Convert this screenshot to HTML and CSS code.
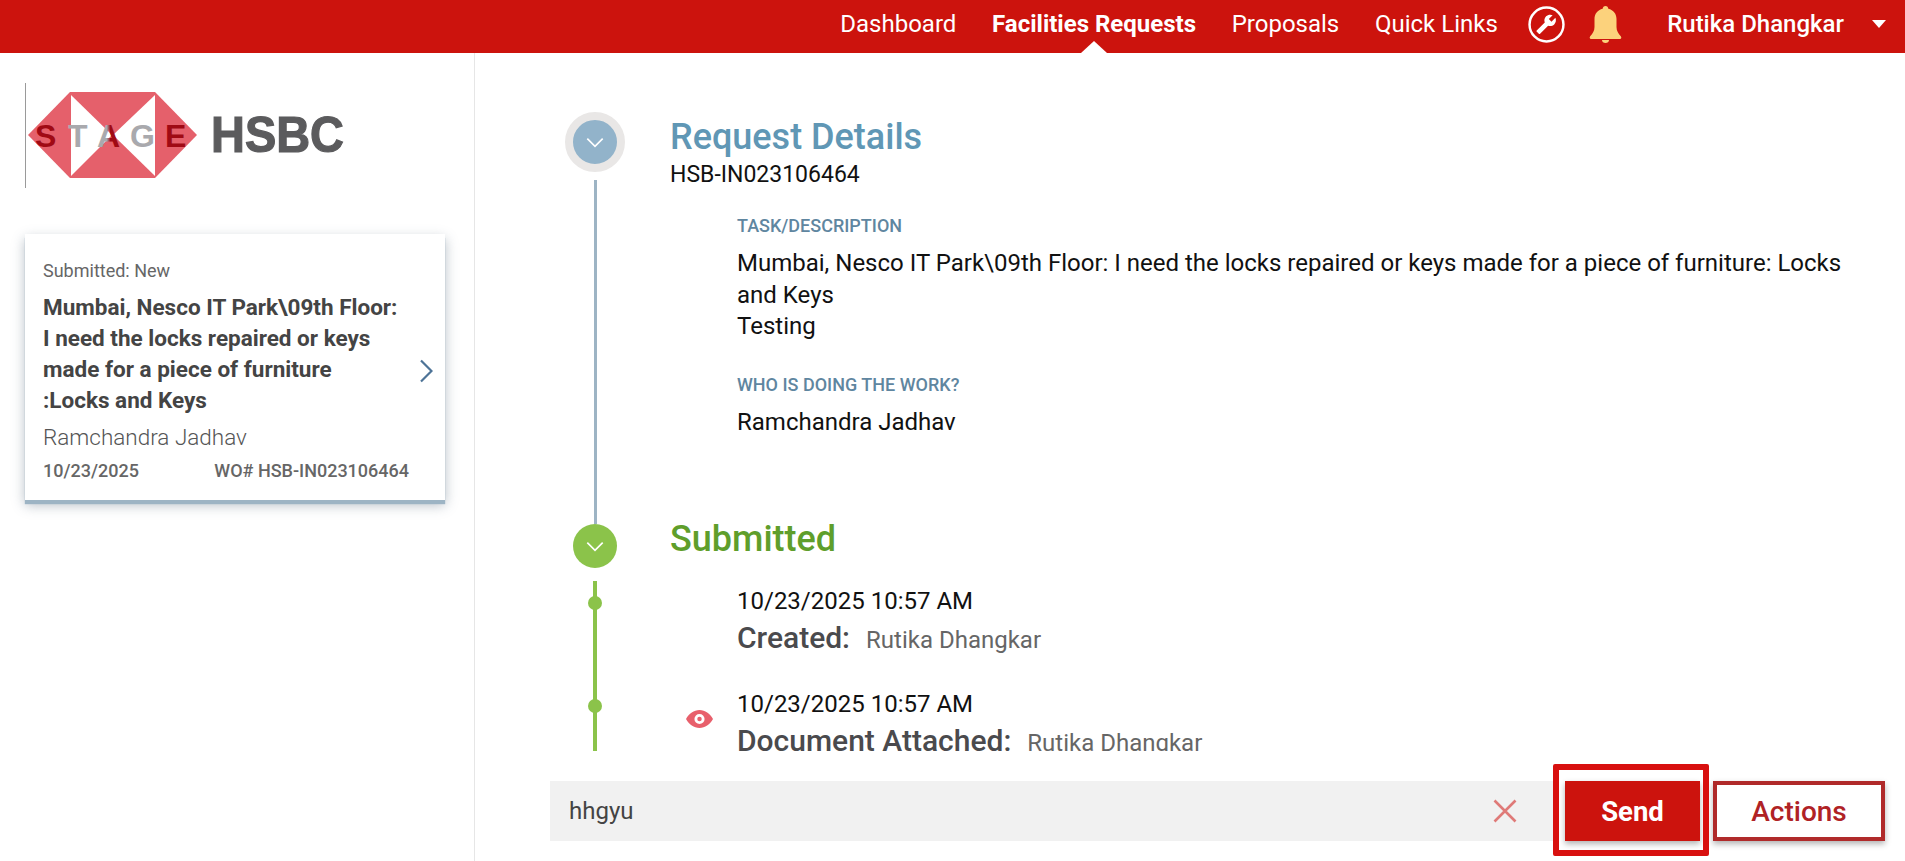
FILE: index.html
```html
<!DOCTYPE html>
<html lang="en">
<head>
<meta charset="utf-8">
<title>Facilities Requests</title>
<link rel="stylesheet" href="styles.css">
</head>
<body>
<div class="app">
  <header class="topbar">
    <nav class="nav">
      <a class="nav-link">Dashboard</a>
      <a class="nav-link active">Facilities Requests</a>
      <a class="nav-link">Proposals</a>
      <a class="nav-link">Quick Links</a>
    </nav>
    <svg class="icon-wrench" viewBox="0 0 36 36" aria-hidden="true">
      <circle cx="18" cy="18" r="16.5" fill="none" stroke="#fff" stroke-width="2.4"/>
      <g transform="translate(28 7.5) scale(-0.86 0.86)">
        <path fill="#fff" d="M22.7 19l-9.1-9.1c.9-2.3.4-5-1.5-6.9-2-2-5-2.4-7.4-1.3L9 6 6 9 1.6 4.7C.4 7.1.9 10.1 2.9 12.1c1.9 1.9 4.6 2.4 6.9 1.5l9.1 9.1c.4.4 1 .4 1.4 0l2.3-2.3c.5-.4.5-1.1.1-1.4z"/>
      </g>
    </svg>
    <svg class="icon-bell" viewBox="0 0 32 37" aria-hidden="true">
      <path fill="#fcd27c" d="M16 0c-1.600 0-2.800 1.200-2.800 2.800C8 4 5 8 5 13v8c0 4-1.800 6.500-4.300 9.300-1 1.100-.5 2.700.8 2.700h29c1.300 0 1.800-1.600.8-2.700C28.800 27.500 27 25 27 21v-8c0-5-3-9-8.200-10.200C18.800 1.200 17.600 0 16 0z"/>
      <path fill="#fcd27c" d="M12.500 34h7c0 1.800-1.500 3-3.500 3s-3.500-1.200-3.500-3z"/>
    </svg>
    <span class="user">Rutika Dhangkar</span>
    <span class="caret"></span>
  </header>

  <div class="layout">
    <aside class="sidebar">
      <svg class="logo" viewBox="0 0 350 106" role="img">
        <defs>
          <linearGradient id="letter-a" x1="0" x2="1" y1="0" y2="0">
            <stop offset="0.42" stop-color="#a9a9ad"/>
            <stop offset="0.58" stop-color="#a00a14"/>
          </linearGradient>
        </defs>
        <line x1="0.500" y1="0" x2="0.500" y2="105" stroke="#9a9a9a" stroke-width="1"/>
        <polygon fill="#e5606b" points="3,52 45,9 130,9 172,52 130,95 45,95"/>
        <polygon fill="#fff" points="46,12 87,52 46,93"/>
        <polygon fill="#fff" points="130,12 88,52 130,93"/>
        <text class="logo-stage stage-red" x="10" y="64">S</text>
        <text class="logo-stage stage-gray" x="43" y="64">T</text>
        <text class="logo-stage" fill="url(#letter-a)" x="72" y="64">A</text>
        <text class="logo-stage stage-gray" x="105" y="64">G</text>
        <text class="logo-stage stage-red" x="140" y="64">E</text>
        <text class="logo-word" x="186" y="69" textLength="133" lengthAdjust="spacingAndGlyphs">HSBC</text>
      </svg>

      <article class="card">
        <div class="card-status">Submitted: New</div>
        <div class="card-title">Mumbai, Nesco IT Park\09th Floor: I need the locks repaired or keys made for a piece of furniture :Locks and Keys</div>
        <div class="card-person">Ramchandra Jadhav</div>
        <div class="card-meta">
          <span>10/23/2025</span>
          <span>WO# HSB-IN023106464</span>
        </div>
        <svg class="card-chevron" viewBox="0 0 14 24" aria-hidden="true">
          <path d="M2 1.500 12.500 12 2 22.500" fill="none" stroke="#4d7397" stroke-width="2.200"/>
        </svg>
      </article>
    </aside>

    <main class="content">
      <div class="scroll">
        <section class="phase phase-details">
          <div class="rail">
            <span class="node node-blue">
              <svg viewBox="0 0 16 10" aria-hidden="true"><path d="M1 1.500l7 7 7-7" fill="none" stroke="#fff" stroke-width="1.500"/></svg>
            </span>
            <span class="rail-line"></span>
          </div>
          <div class="phase-body phase-body-details">
            <h2 class="phase-title title-blue">Request Details</h2>
            <div class="ref">HSB-IN023106464</div>
            <div class="field">
              <div class="field-label">TASK/DESCRIPTION</div>
              <div class="field-value">Mumbai, Nesco IT Park\09th Floor: I need the locks repaired or keys made for a piece of furniture: Locks and Keys<br>Testing</div>
            </div>
            <div class="field">
              <div class="field-label">WHO IS DOING THE WORK?</div>
              <div class="field-value">Ramchandra Jadhav</div>
            </div>
          </div>
        </section>

        <section class="phase phase-submitted">
          <div class="rail">
            <span class="node node-green">
              <svg viewBox="0 0 16 10" aria-hidden="true"><path d="M1 1.500l7 7 7-7" fill="none" stroke="#fff" stroke-width="1.500"/></svg>
            </span>
          </div>
          <div class="phase-body">
            <h2 class="phase-title title-green">Submitted</h2>
          </div>
        </section>

        <div class="event">
          <div class="event-body">
            <div class="event-date">10/23/2025 10:57 AM</div>
            <div class="event-line"><strong>Created:</strong><span>Rutika Dhangkar</span></div>
          </div>
        </div>
        <div class="event">
          <svg class="eye" viewBox="0 0 24 16" aria-hidden="true">
            <path fill="#e8606c" fill-rule="evenodd" d="M12 0C7 0 2.700 3.200 0 8c2.700 4.800 7 8 12 8s9.300-3.200 12-8c-2.700-4.800-7-8-12-8zm0 3.500a4.500 4.500 0 1 1 0 9 4.500 4.500 0 0 1 0-9zm0 2.500a2 2 0 1 0 0 4 2 2 0 0 0 0-4z"/>
          </svg>
          <div class="event-body">
            <div class="event-date">10/23/2025 10:57 AM</div>
            <div class="event-line"><strong>Document Attached:</strong><span>Rutika Dhangkar</span></div>
          </div>
        </div>
      </div>

      <div class="composer">
        <div class="composer-input">
          <span class="composer-text">hhgyu</span>
          <svg class="composer-clear" viewBox="0 0 24 24" aria-hidden="true">
            <path d="M1.500 1.500l21 21M22.500 1.500l-21 21" fill="none" stroke="#df7a78" stroke-width="2.600"/>
          </svg>
        </div>
        <button class="btn btn-send" type="button">Send</button>
        <button class="btn btn-actions" type="button">Actions</button>
      </div>
    </main>
  </div>
</div>
</body>
</html>
```
FILE: styles.css
```css
* { box-sizing: border-box; }
html, body { height: 100%; }
body {
  margin: 0;
  background: #fff;
  color: #111;
  font-family: Roboto, "Liberation Sans", sans-serif;
  overflow: hidden;
}
.app { display: flex; flex-direction: column; height: 100vh; }

/* top bar */
.topbar {
  position: relative;
  flex: none;
  height: 53px;
  display: flex;
  align-items: center;
  justify-content: flex-end;
  padding: 0 19px 5px 0;
  background: #cc130d;
  color: #fff;
}
.nav { display: flex; gap: 35.700px; }
.nav-link { position: relative; font-size: 24px; line-height: 30px; white-space: nowrap; }
.nav-link.active { font-weight: 700; }
.nav-link.active::after {
  content: "";
  position: absolute;
  left: 50%;
  bottom: -14px;
  margin-left: -13px;
  border-left: 13px solid transparent;
  border-right: 13px solid transparent;
  border-bottom: 12px solid #fff;
}
.icon-wrench { width: 37px; height: 37px; margin-left: 30.400px; }
.icon-bell { width: 33px; height: 37px; margin-left: 24px; }
.user { margin-left: 45px; font-size: 24px; font-weight: 500; white-space: nowrap; }
.caret {
  margin-left: 28px;
  border-left: 7.500px solid transparent;
  border-right: 7.500px solid transparent;
  border-top: 8px solid #fff;
}

/* layout */
.layout { flex: 1; min-height: 0; display: flex; }
.sidebar {
  flex: none;
  width: 475px;
  padding: 30px 29px 0 25px;
  border-right: 1px solid #e6e6e6;
}
.logo { display: block; width: 350px; height: 106px; }
.logo-stage { font-family: "Liberation Sans", sans-serif; font-weight: 700; font-size: 32px; }
.stage-red { fill: #a00a14; }
.stage-gray { fill: #a9a9ad; }
.logo-word {
  font-family: "Liberation Sans", sans-serif;
  font-weight: 700;
  font-size: 50px;
  fill: #5b5b5d;
  stroke: #5b5b5d;
  stroke-width: 1.200px;
}

.card {
  position: relative;
  margin-top: 45px;
  height: 266px;
  padding: 27px 44px 0 18px;
  background: #fff;
  box-shadow: 0 4px 1px #9db4c4, 0 5px 12px rgba(70, 90, 110, .4);
}
.card-status { font-size: 18px; line-height: 20px; color: #666; }
.card-title { margin-top: 11px; font-size: 22.500px; line-height: 31px; font-weight: 700; color: #444; }
.card-person { margin-top: 5px; font-size: 22.500px; line-height: 32px; font-weight: 300; color: #555; }
.card-meta {
  display: flex;
  justify-content: space-between;
  margin-top: 7px;
  margin-right: -8px;
  font-size: 18px;
  line-height: 22px;
  font-weight: 500;
  color: #666;
}
.card-chevron { position: absolute; top: 125px; right: 12px; width: 14px; height: 24px; }

/* main */
.content {
  flex: 1;
  min-width: 0;
  display: flex;
  flex-direction: column;
  padding: 0 20px 20px 75px;
}
.scroll { flex: 1; min-height: 0; overflow: hidden; padding: 59px 25px 0 15px; }
.phase { display: flex; gap: 45px; }
.phase-details { height: 412px; }
.rail { flex: none; width: 60px; display: flex; flex-direction: column; align-items: center; }
.node { flex: none; display: flex; align-items: center; justify-content: center; border-radius: 50%; }
.node svg { width: 18px; height: 11px; }
.node-blue {
  width: 60px;
  height: 60px;
  background: #92b3ca;
  border: 8px solid #e9e7e6;
}
.node-green { width: 44px; height: 44px; background: #8bc34a; }
.rail-line { width: 3px; flex: 1; margin-top: 8px; background: #9db4c4; }
.phase-body { flex: 1; min-width: 0; }
.phase-body-details { padding-top: 5px; }
.phase-title { margin: 0; font-size: 36px; line-height: 40px; font-weight: 500; }
.title-blue { color: #6097b5; }
.title-green { color: #5f9e2b; line-height: 30px; }
.ref { margin-top: 5px; font-size: 23px; line-height: 26px; color: #111; }
.field { margin: 27px 0 0 67px; }
.field + .field { margin-top: 31px; }
.field-label { font-size: 18px; line-height: 22px; font-weight: 500; color: #5f86a0; }
.field-value { margin-top: 11px; font-size: 24px; line-height: 31.500px; color: #111; }

.phase-submitted { height: 57px; }
.event {
  position: relative;
  height: 103px;
  padding-left: 172px;
}
.event::before {
  content: "";
  position: absolute;
  left: 28px;
  top: 0;
  bottom: 0;
  width: 4px;
  background: #8bc34a;
}
.event::after {
  content: "";
  position: absolute;
  left: 23px;
  top: 15px;
  width: 14px;
  height: 14px;
  border-radius: 50%;
  background: #8bc34a;
}
.eye { position: absolute; left: 121px; top: 25px; width: 27px; height: 20px; }
.event-date { padding-top: 5px; font-size: 24px; line-height: 30px; color: #111; }
.event-line { display: flex; align-items: baseline; gap: 16px; margin-top: 3px; line-height: 38px; }
.event-line strong { font-size: 30px; font-weight: 500; color: #4a4a4d; }
.event-line span { font-size: 24px; color: #666; }

/* composer */
.composer { flex: none; display: flex; height: 60px; margin-top: 30px; }
.composer-input {
  flex: 1;
  min-width: 0;
  display: flex;
  align-items: center;
  justify-content: space-between;
  padding: 0 36px 0 19px;
  background: #f1f1f1;
}
.composer-text { font-size: 24px; color: #444; }
.composer-clear { width: 24px; height: 24px; }
.btn {
  font-family: Roboto, "Liberation Sans", sans-serif;
  font-size: 27.500px;
  font-weight: 700;
  border-radius: 0;
  padding: 0;
  box-shadow: 0 3px 6px rgba(0, 0, 0, .3);
}
.btn-send {
  position: relative;
  width: 135px;
  margin-left: 12px;
  color: #fff;
  background: #cc130d;
  border: 0;
}
.btn-send::after {
  content: "";
  position: absolute;
  inset: -17px -9px -15px -12px;
  border: 6px solid #d8100f;
  border-radius: 2px;
}
.btn-actions {
  width: 172px;
  margin-left: 13px;
  font-size: 28px;
  font-weight: 500;
  color: #b02225;
  background: #fff;
  border: 4px solid #b02a2a;
}
```
